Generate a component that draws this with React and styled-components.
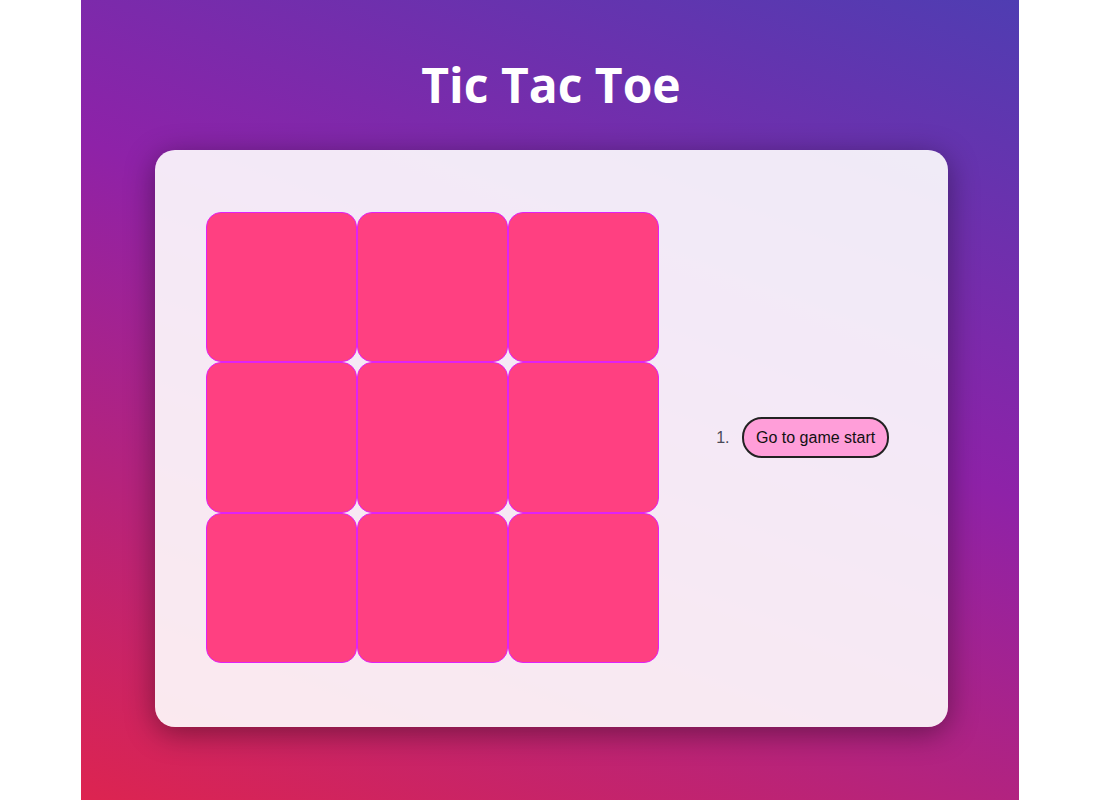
import React, { useState } from "react";
import styled, { createGlobalStyle } from "styled-components";

const GlobalStyle = createGlobalStyle`
  body {
    margin: 0;
    background: #fff;
    font-family: "Liberation Sans", Arial, sans-serif;
  }
`;

const Page = styled.div`
  width: 938px;
  min-height: 100vh;
  margin: 0 auto;
  box-sizing: border-box;
  padding-top: 1px;
  background: linear-gradient(21deg, #dd2450 0%, #8e22a8 57%, #4f3db2 100%);
  display: flex;
  flex-direction: column;
  align-items: center;
`;

const Title = styled.h1`
  margin: 55px 0 36px 2px;
  font-family: "Open Sans", "Noto Sans", sans-serif;
  font-weight: 700;
  font-size: 48px;
  line-height: 1.2;
  color: #fff;
`;

const Card = styled.div`
  width: 793px;
  margin-left: 3px;
  box-sizing: border-box;
  padding: 62px 51px 64px;
  display: flex;
  align-items: center;
  background: rgba(255, 255, 255, 0.9);
  border-radius: 20px;
  box-shadow: 0 6px 30px rgba(0, 0, 0, 0.4);
`;

const Board = styled.div`
  display: grid;
  grid-template-columns: repeat(3, 151px);
  grid-template-rows: 150px 151px 150px;
`;

const Square = styled.button`
  box-sizing: border-box;
  width: 100%;
  height: 100%;
  padding: 0;
  background: #ff4081;
  border: 1px solid #e022f6;
  border-radius: 15px;
  font-size: 48px;
  font-weight: 700;
  color: #fff;
  cursor: pointer;
`;

const Moves = styled.ol`
  margin: 0 0 0 35px;
  padding-left: 40px;
  font-size: 16px;
  color: #333;
`;

const Move = styled.li`
  &::marker {
    color: #4a4a58;
  }
`;

const JumpButton = styled.button`
  margin-left: 8px;
  padding: 10px 12px 9px;
  font-family: "Liberation Sans", Arial, sans-serif;
  font-size: 16px;
  color: #111;
  background: #ff9ed9;
  border: 2px solid #222;
  border-radius: 20px;
  cursor: pointer;
`;

export default function App() {
  const [history, setHistory] = useState([Array(9).fill(null)]);
  const [step, setStep] = useState(0);
  const squares = history[step];
  const xNext = step % 2 === 0;

  const handleClick = (i) => {
    if (squares[i]) return;
    const next = squares.slice();
    next[i] = xNext ? "X" : "O";
    const h = history.slice(0, step + 1).concat([next]);
    setHistory(h);
    setStep(h.length - 1);
  };

  return (
    <>
      <GlobalStyle />
      <Page>
        <Title>Tic Tac Toe</Title>
        <Card>
          <Board>
            {squares.map((v, i) => (
              <Square key={i} onClick={() => handleClick(i)}>
                {v}
              </Square>
            ))}
          </Board>
          <Moves>
            {history.map((_, move) => (
              <Move key={move}>
                <JumpButton onClick={() => setStep(move)}>
                  {move > 0 ? `Go to move #${move}` : "Go to game start"}
                </JumpButton>
              </Move>
            ))}
          </Moves>
        </Card>
      </Page>
    </>
  );
}
